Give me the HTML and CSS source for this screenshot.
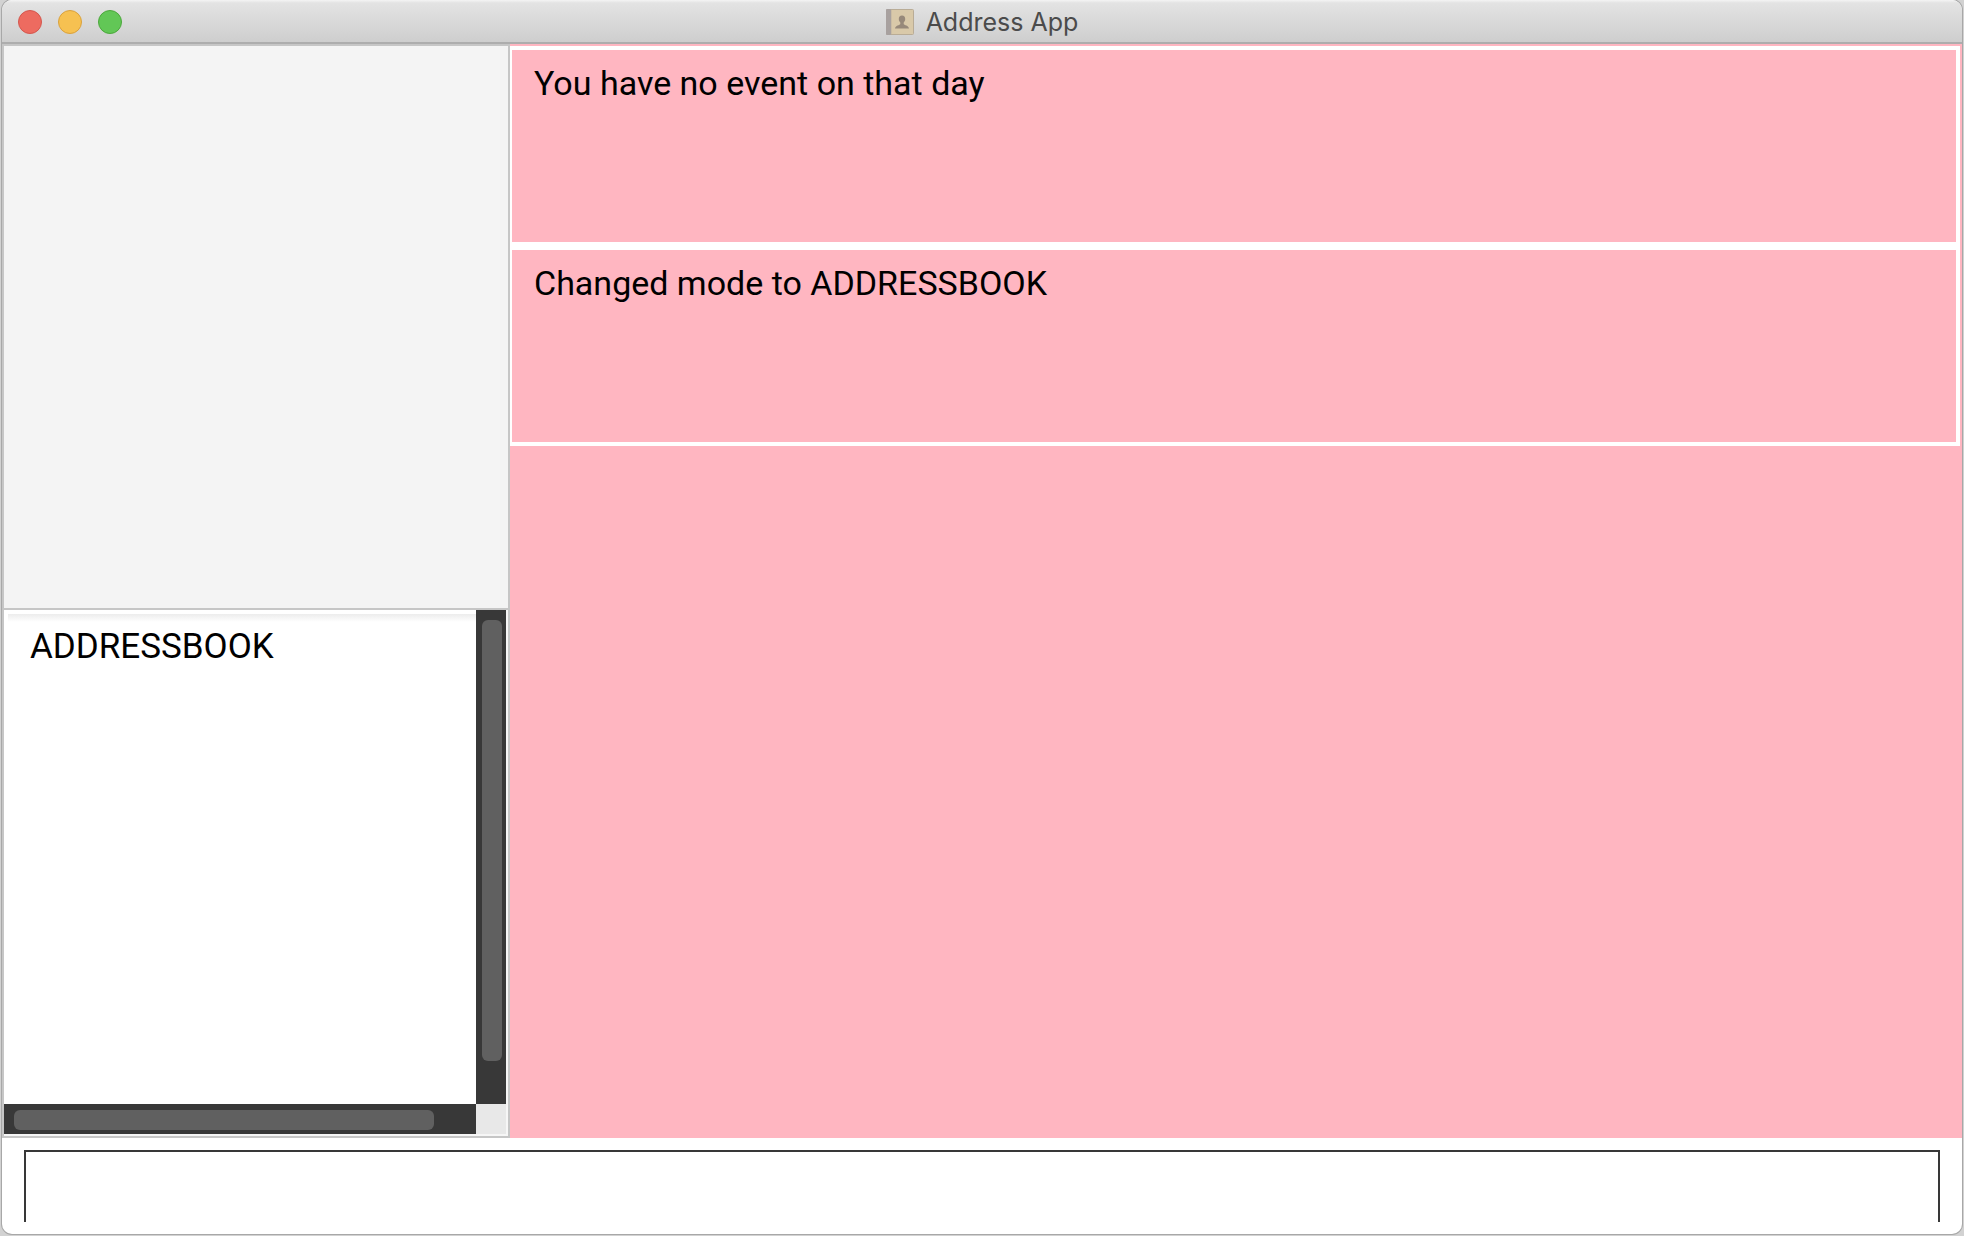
FILE: index.html
```html
<!DOCTYPE html>
<html lang="en">
<head>
<meta charset="utf-8">
<title>Address App</title>
<link rel="stylesheet" href="styles.css">
</head>
<body>
<div class="window">
  <header class="titlebar">
    <div class="controls">
      <button class="dot close" type="button" aria-label="Close"></button>
      <button class="dot minimize" type="button" aria-label="Minimize"></button>
      <button class="dot zoom" type="button" aria-label="Zoom"></button>
    </div>
    <h1 class="title">
      <svg class="book" width="28" height="26" viewBox="0 0 28 26" aria-hidden="true">
        <rect x="0.5" y="0.5" width="27" height="25" rx="1" fill="#d9c9a9" stroke="#b9ac96"/>
        <rect x="0" y="0" width="5" height="26" rx="1" fill="#a8a19f"/>
        <path d="M5.500 1v24" stroke="#cbbda5"/>
        <path d="M16 6.500c-2.200 0-3.200 1.500-3.200 3.500 0 1.700.7 2.600 1.500 3.500v1.500c-.5 1.200-5 1.400-5.300 4.500h14c-.3-3.100-4.800-3.300-5.300-4.500v-1.500c.8-.9 1.500-1.800 1.500-3.500 0-2-1-3.500-3.200-3.500z" fill="#97897a"/>
      </svg>
      <span>Address App</span>
    </h1>
  </header>
  <main class="content">
    <aside class="side">
      <section class="panel"></section>
      <section class="mode">
        <p class="mode-text">ADDRESSBOOK</p>
        <div class="track vertical"><div class="thumb"></div></div>
        <div class="track horizontal"><div class="thumb"></div></div>
        <div class="corner"></div>
      </section>
    </aside>
    <section class="messages">
      <p class="message">You have no event on that day</p>
      <p class="message">Changed mode to ADDRESSBOOK</p>
    </section>
  </main>
  <form class="command">
    <input class="command-input" type="text" aria-label="Command">
  </form>
</div>
</body>
</html>
```
FILE: styles.css
```css
* {
  box-sizing: border-box;
}

body {
  margin: 0;
  padding: 0 2px 2px;
  height: 100vh;
  background: #d2d2d2;
  font-family: Roboto, "Liberation Sans", sans-serif;
  color: #000;
}

.window {
  display: flex;
  flex-direction: column;
  height: 100%;
  overflow: hidden;
  border-radius: 10px;
  background: #fff;
  box-shadow: 0 0 0 1px #a8a8a8;
}

.titlebar {
  display: grid;
  grid-template-columns: 1fr auto 1fr;
  align-items: center;
  flex: none;
  height: 44px;
  padding: 2px 16px 0;
  border-bottom: 2px solid #adadad;
  background: linear-gradient(#f4f4f4, #e3e3e3 3px, #cecece);
}

.controls {
  display: flex;
  gap: 16px;
}

.dot {
  width: 24px;
  height: 24px;
  padding: 0;
  border: 1px solid;
  border-radius: 50%;
}

.close {
  border-color: #d3574e;
  background: #ed6b60;
}

.minimize {
  border-color: #d9a13d;
  background: #f6c151;
}

.zoom {
  border-color: #4ca73c;
  background: #62c756;
}

.title {
  display: flex;
  align-items: center;
  gap: 12px;
  margin: 0;
  font-family: Inter, "Liberation Sans", sans-serif;
  font-size: 25px;
  line-height: 32px;
  font-weight: 400;
  color: #4b4b4b;
}

.content {
  display: grid;
  grid-template-columns: 508px 1fr;
  flex: 1;
  min-height: 0;
}

.side {
  display: grid;
  grid-template-rows: 564px 1fr;
  border: 2px solid #c6c6c6;
  min-height: 0;
}

.panel {
  border-bottom: 2px solid #c6c6c6;
  background: #f4f4f4;
}

.mode {
  display: grid;
  grid-template-columns: 1fr 30px;
  grid-template-rows: 1fr 30px;
  min-height: 0;
  padding: 0 2px 2px 0;
  background: #f6f6f6;
}

.mode-text {
  margin: 0;
  padding: 10px 22px;
  border: solid #fff;
  border-width: 4px 0 0 4px;
  background: linear-gradient(#ececec, #fff 8px);
  font-size: 35px;
  line-height: 46px;
}

.track {
  display: flex;
  background: #383838;
}

.thumb {
  flex: 1;
  border-radius: 6px;
  background: #606060;
}

.vertical {
  padding: 10px 4px 43px 6px;
}

.horizontal {
  padding: 6px 42px 4px 10px;
}

.corner {
  background: #e8e8e8;
}

.messages {
  padding: 2px 2px 0 0;
  background: #ffb6c1;
}

.message {
  height: 200px;
  margin: 0;
  padding: 10px 22px;
  border: solid #fff;
  border-width: 4px 4px 4px 2px;
  background: #ffb6c1;
  font-size: 34px;
  line-height: 46px;
}

.command {
  flex: none;
  padding: 12px 22px;
}

.command-input {
  display: block;
  width: 100%;
  height: 72px;
  padding: 0 16px;
  border: 2px solid #383838;
  border-bottom: 0;
  border-radius: 0;
  outline: 0;
  background: #fff;
  font: inherit;
  font-size: 34px;
}
```
